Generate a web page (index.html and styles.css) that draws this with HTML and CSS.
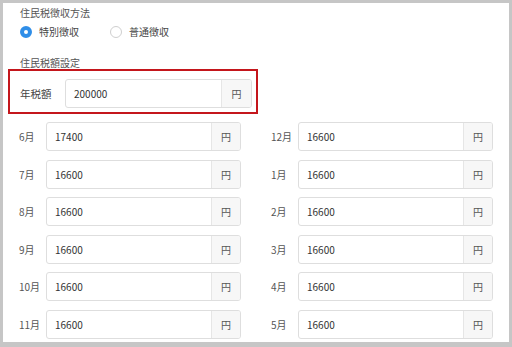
FILE: index.html
```html
<!DOCTYPE html>
<html lang="ja">
<head>
  <meta charset="UTF-8">
  <meta name="viewport" content="width=device-width, initial-scale=1.0">
  <title>住民税設定</title>
  <link rel="stylesheet" href="styles.css">
</head>
<body>
  <div class="panel">
    <div class="section-title">住民税徴収方法</div>
    <div class="radio-row">
      <label class="radio checked"><span class="radio-dot"></span>特別徴収</label>
      <label class="radio"><span class="radio-dot"></span>普通徴収</label>
    </div>

    <div class="section-title amount-title">住民税額設定</div>
    <div class="annual-box">
      <span class="annual-label">年税額</span>
      <div class="input-group annual-input">
        <span class="input-value">200000</span>
        <span class="addon">円</span>
      </div>
    </div>

    <div class="month-grid">
      <div class="month-row"><span class="month-label">6月</span><div class="input-group"><span class="input-value">17400</span><span class="addon">円</span></div></div>
      <div class="month-row"><span class="month-label">12月</span><div class="input-group"><span class="input-value">16600</span><span class="addon">円</span></div></div>
      <div class="month-row"><span class="month-label">7月</span><div class="input-group"><span class="input-value">16600</span><span class="addon">円</span></div></div>
      <div class="month-row"><span class="month-label">1月</span><div class="input-group"><span class="input-value">16600</span><span class="addon">円</span></div></div>
      <div class="month-row"><span class="month-label">8月</span><div class="input-group"><span class="input-value">16600</span><span class="addon">円</span></div></div>
      <div class="month-row"><span class="month-label">2月</span><div class="input-group"><span class="input-value">16600</span><span class="addon">円</span></div></div>
      <div class="month-row"><span class="month-label">9月</span><div class="input-group"><span class="input-value">16600</span><span class="addon">円</span></div></div>
      <div class="month-row"><span class="month-label">3月</span><div class="input-group"><span class="input-value">16600</span><span class="addon">円</span></div></div>
      <div class="month-row"><span class="month-label">10月</span><div class="input-group"><span class="input-value">16600</span><span class="addon">円</span></div></div>
      <div class="month-row"><span class="month-label">4月</span><div class="input-group"><span class="input-value">16600</span><span class="addon">円</span></div></div>
      <div class="month-row"><span class="month-label">11月</span><div class="input-group"><span class="input-value">16600</span><span class="addon">円</span></div></div>
      <div class="month-row"><span class="month-label">5月</span><div class="input-group"><span class="input-value">16600</span><span class="addon">円</span></div></div>
    </div>
  </div>
</body>
</html>
```

FILE: styles.css
```css
html, body {
  margin: 0;
  padding: 0;
}
body {
  font-family: "Noto Sans CJK JP", "Noto Sans", sans-serif;
  font-size: 10px;
  color: #333;
  background: #c6c6c6;
  padding: 3px 3px 5px 3px;
  height: 347px;
  box-sizing: border-box;
  overflow: hidden;
}
.panel {
  background: #fff;
  height: 339px;
  padding-top: 3px;
  box-sizing: border-box;
}
.section-title {
  padding-left: 17px;
  line-height: 14px;
  color: #555;
}
.radio-row {
  display: flex;
  gap: 31px;
  padding-left: 17px;
  margin-top: 6px;
  height: 12px;
  align-items: center;
}
.radio {
  display: flex;
  align-items: center;
  gap: 7px;
  color: #444;
  line-height: 12px;
}
.radio-dot {
  width: 12px;
  height: 12px;
  border-radius: 50%;
  border: 1px solid #cfcfcf;
  box-sizing: border-box;
  background: #fff;
}
.radio.checked .radio-dot {
  border: 4px solid #2f8ee8;
  background: #fff;
}
.amount-title {
  margin-top: 19px;
  line-height: 12px;
}
.annual-box {
  margin-left: 5px;
  width: 250px;
  box-sizing: border-box;
  border: 2px solid #c4161c;
  padding: 8px 4px 4px 10px;
  display: flex;
  align-items: center;
}
.annual-label {
  width: 45px;
  font-size: 10.5px;
  color: #444;
}
.input-group {
  flex: 1;
  display: flex;
  height: 29px;
  border: 1px solid #dedede;
  border-radius: 3px;
  box-sizing: border-box;
  overflow: hidden;
}
.input-value {
  flex: 1;
  display: flex;
  align-items: center;
  padding-left: 8px;
  color: #333;
}
.addon {
  width: 28px;
  display: flex;
  align-items: center;
  justify-content: center;
  background: #f7f7f7;
  border-left: 1px solid #e6e6e6;
  color: #555;
}
.annual-input .addon {
  width: 29px;
}
.month-grid {
  display: grid;
  grid-template-columns: 222px 222px;
  column-gap: 30px;
  row-gap: 8.5px;
  padding-left: 16px;
  margin-top: 8px;
}
.month-row {
  display: flex;
  align-items: center;
}
.month-label {
  width: 27px;
  color: #555;
}
```
